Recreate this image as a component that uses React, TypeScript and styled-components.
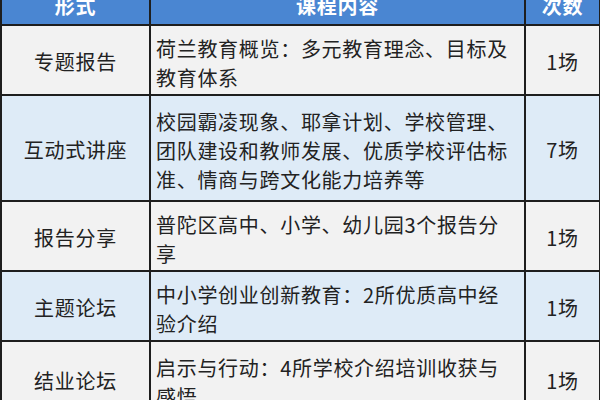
import React from "react";
import styled, { createGlobalStyle } from "styled-components";

const GlobalStyle = createGlobalStyle`
  html, body {
    margin: 0;
    padding: 0;
    background: #ffffff;
  }
  body {
    font-family: "Noto Sans CJK SC", "Noto Sans", sans-serif;
  }
`;

const Frame = styled.div`
  width: 600px;
  height: 400px;
  overflow: hidden;
`;

const Table = styled.table`
  width: 599px;
  margin-top: -14px;
  border-collapse: collapse;
  table-layout: fixed;
  color: #222222;
  font-size: 20px;
  letter-spacing: 0.7px;
`;

const HeadCell = styled.th`
  height: 38px;
  padding: 0;
  background: #4a86d2;
  color: #ffffff;
  font-weight: 700;
  font-size: 20px;
  text-align: center;
  vertical-align: middle;
  border: 2px solid #1e1e1e;
  border-top: none;
`;

const Row = styled.tr<{ $tint: boolean }>`
  background: ${(p) => (p.$tint ? "#deebf7" : "#f2f2f2")};
`;

const Cell = styled.td<{ $h: number }>`
  height: ${(p) => p.$h}px;
  padding: 0 5px;
  border: 2px solid #1e1e1e;
  vertical-align: middle;
  line-height: 29px;
  box-sizing: border-box;
`;

const CenterCell = styled(Cell)`
  text-align: center;
  padding-top: 3px;
`;

const Lines = styled.div`
  white-space: nowrap;
  padding-top: 5px;
`;

type Item = { form: string; lines: string[]; count: string; h: number };

const items: Item[] = [
  { form: "专题报告", lines: ["荷兰教育概览：多元教育理念、目标及", "教育体系"], count: "1场", h: 70 },
  {
    form: "互动式讲座",
    lines: ["校园霸凌现象、耶拿计划、学校管理、", "团队建设和教师发展、优质学校评估标", "准、情商与跨文化能力培养等"],
    count: "7场",
    h: 106,
  },
  { form: "报告分享", lines: ["普陀区高中、小学、幼儿园3个报告分", "享"], count: "1场", h: 70 },
  { form: "主题论坛", lines: ["中小学创业创新教育：2所优质高中经", "验介绍"], count: "1场", h: 70 },
  { form: "结业论坛", lines: ["启示与行动：4所学校介绍培训收获与", "感悟"], count: "1场", h: 76 },
];

export default function App() {
  return (
    <>
      <GlobalStyle />
      <Frame>
        <Table>
          <colgroup>
            <col style={{ width: 149 }} />
            <col style={{ width: 375 }} />
            <col style={{ width: 75 }} />
          </colgroup>
          <thead>
            <tr>
              <HeadCell>形式</HeadCell>
              <HeadCell>课程内容</HeadCell>
              <HeadCell>次数</HeadCell>
            </tr>
          </thead>
          <tbody>
            {items.map((it, i) => (
              <Row key={it.form} $tint={i % 2 === 1}>
                <CenterCell $h={it.h}>{it.form}</CenterCell>
                <Cell $h={it.h}>
                  <Lines>
                    {it.lines.map((l) => (
                      <div key={l}>{l}</div>
                    ))}
                  </Lines>
                </Cell>
                <CenterCell $h={it.h}>{it.count}</CenterCell>
              </Row>
            ))}
          </tbody>
        </Table>
      </Frame>
    </>
  );
}
